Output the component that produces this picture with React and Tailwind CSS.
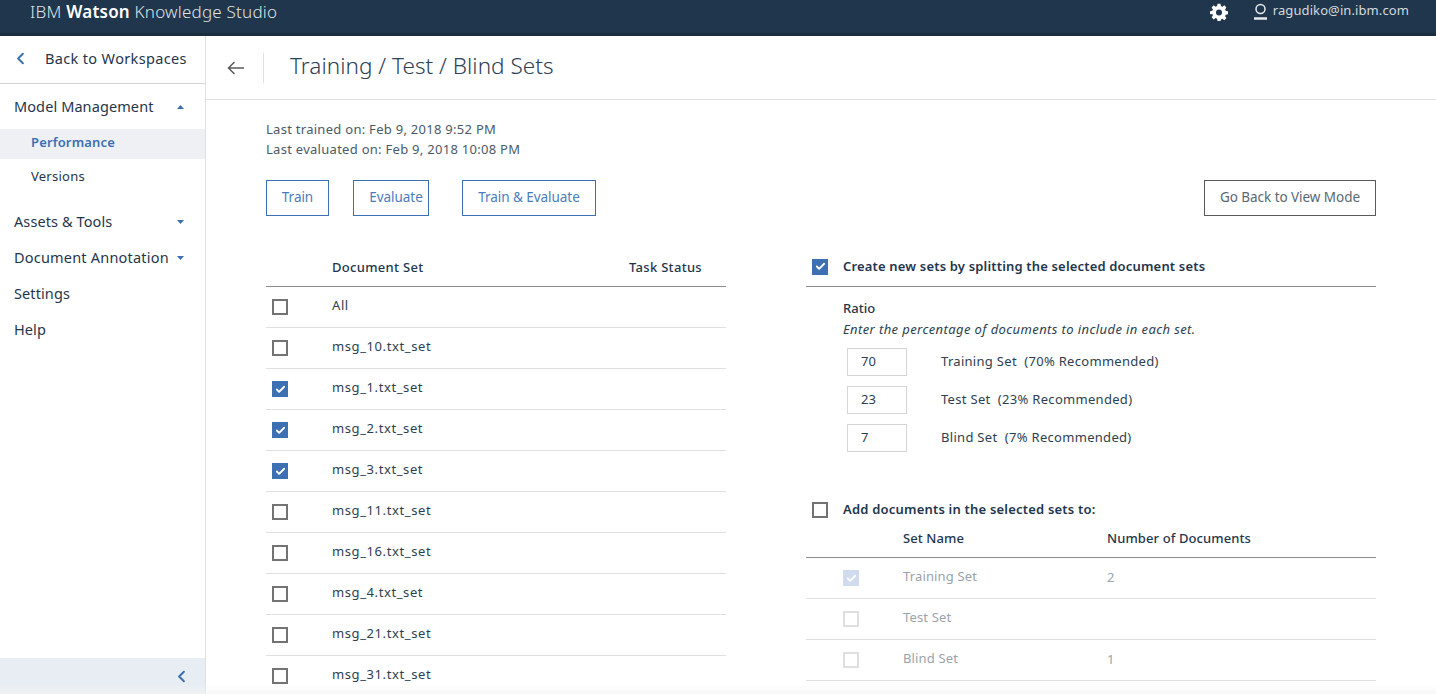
import { ChevronLeft, Check } from 'lucide-react';

const FONT = "font-['Noto_Sans',sans-serif]";

const documentSets = [
    { name: 'All', checked: false },
    { name: 'msg_10.txt_set', checked: false },
    { name: 'msg_1.txt_set', checked: true },
    { name: 'msg_2.txt_set', checked: true },
    { name: 'msg_3.txt_set', checked: true },
    { name: 'msg_11.txt_set', checked: false },
    { name: 'msg_16.txt_set', checked: false },
    { name: 'msg_4.txt_set', checked: false },
    { name: 'msg_21.txt_set', checked: false },
    { name: 'msg_31.txt_set', checked: false },
];

const ratios = [
    { value: '70', label: 'Training Set  (70% Recommended)' },
    { value: '23', label: 'Test Set  (23% Recommended)' },
    { value: '7', label: 'Blind Set  (7% Recommended)' },
];

const targetSets = [
    { name: 'Training Set', count: '2', checked: true },
    { name: 'Test Set', count: '', checked: false },
    { name: 'Blind Set', count: '1', checked: false },
];

function Checkbox({ checked, disabled }) {
    if (checked) {
        return (
            <span className={`flex h-4 w-4 shrink-0 items-center justify-center ${disabled ? 'bg-[#d0dcee]' : 'bg-[#3d70b2]'}`}>
                <Check size={11} strokeWidth={4} className="text-white" />
            </span>
        );
    }
    return <span className={`block h-4 w-4 shrink-0 border-2 ${disabled ? 'border-[#dfdfdf]' : 'border-[#737373]'}`}></span>;
}

function Caret({ up }) {
    return (
        <svg width="7" height="4" viewBox="0 0 7 4" className="fill-[#3d70b2]">
            <path d={up ? 'M0 4 L3.5 0 L7 4 Z' : 'M0 0 L3.5 4 L7 0 Z'} />
        </svg>
    );
}

function OutlineButton({ children, className }) {
    return (
        <button className={`flex h-9 items-center justify-center border pb-[2px] text-[13.5px] tracking-[-0.05px] ${className}`}>
            {children}
        </button>
    );
}

function Header() {
    return (
        <header className="flex h-9 shrink-0 items-start justify-between border-b-[3px] border-[#1a2e3e] bg-[#1f364c] pl-[30px] pr-[27px]">
            <div className="mt-[-1px] text-[17px] leading-[26px] tracking-[0.22px] text-[#dfe3e7] font-light">
                IBM <span className="font-semibold text-white">Watson</span> Knowledge Studio
            </div>
            <div className="flex items-center">
                <svg width="18" height="18" viewBox="0 0 24 24" className="mt-[3px] mr-[25px] fill-white">
                    <path
                        fillRule="evenodd"
                        d="M10 1h4l.6 3.1 1.9.8 2.6-1.8 2.8 2.8-1.8 2.6.8 1.9L24 11v4l-3.1.6-.8 1.9 1.8 2.6-2.8 2.8-2.6-1.8-1.9.8L14 24h-4l-.6-3.1-1.9-.8-2.6 1.8-2.8-2.8 1.8-2.6-.8-1.9L0 15v-4l3.1-.6.8-1.9-1.8-2.6 2.8-2.8 2.6 1.8 1.9-.8zM12 8.500a4 4 0 1 0 0 8 4 4 0 0 0 0-8z"
                    />
                </svg>
                <svg width="15" height="18" viewBox="0 0 15 18" className="mt-[2px] mr-[5px] fill-none stroke-[#e8ebee]">
                    <circle cx="7.500" cy="6" r="4.500" strokeWidth="1.500" />
                    <path d="M1 15.500h13" strokeWidth="2.500" />
                </svg>
                <span className="mt-[-1px] text-[13px] leading-5 tracking-[0.1px] text-[#d5dade]">ragudiko@in.ibm.com</span>
            </div>
        </header>
    );
}

function Sidebar() {
    return (
        <aside className="flex w-[206px] shrink-0 flex-col border-r border-[#dfdfdf] bg-white text-[14.5px] tracking-[0.1px] text-[#1f364c]">
            <div className="flex h-[48px] shrink-0 items-center border-b-[1.5px] border-[#d5d5d5] pb-[2px] pl-[11px]">
                <ChevronLeft size={19} strokeWidth={2.500} className="text-[#3d70b2]" />
                <span className="ml-[15px] tracking-[0.35px]">Back to Workspaces</span>
            </div>
            <div className="flex h-[45px] shrink-0 items-center justify-between pl-[14px] pr-[21px] pt-[1px]">
                Model Management <Caret up />
            </div>
            <div className="flex h-[30px] shrink-0 items-center bg-[#eef0f3] pb-[2px] pl-[31px] text-[13px] font-semibold tracking-[0.15px] text-[#3d70b2]">Performance</div>
            <div className="flex h-[35px] shrink-0 items-center pl-[31px] pt-[1px] text-[13px] tracking-[0.25px]">Versions</div>
            <div className="mt-[10px] flex h-[36px] shrink-0 items-center justify-between pl-[14px] pr-[21px]">
                Assets & Tools <Caret />
            </div>
            <div className="flex h-[36px] shrink-0 items-center justify-between pl-[14px] pr-[21px] tracking-[0.2px]">
                Document Annotation <Caret />
            </div>
            <div className="flex h-[36px] shrink-0 items-center pl-[14px]">Settings</div>
            <div className="flex h-[36px] shrink-0 items-center pl-[14px]">Help</div>
            <div className="mt-auto flex h-9 shrink-0 items-center justify-end bg-[#e8edf4] pr-[14px]">
                <ChevronLeft size={19} strokeWidth={2.500} className="text-[#3d70b2]" />
            </div>
        </aside>
    );
}

function DocumentTable() {
    return (
        <div className="w-[460px] shrink-0">
            <div className="flex h-[37px] items-center border-b border-[#8c8c8c] pb-[1px] text-[13px] font-medium tracking-[0.3px] text-[#1f364c]">
                <span className="ml-[66px] w-[297px]">Document Set</span>
                <span>Task Status</span>
            </div>
            {documentSets.map((row) => (
                <div key={row.name} className="flex h-[41px] shrink-0 items-center border-b border-[#dfdfdf] pl-[6px] text-[13px] tracking-[0.6px] text-[#2d3f50]">
                    <Checkbox checked={row.checked} />
                    <span className="ml-[44px] -mt-[3px]">{row.name}</span>
                </div>
            ))}
        </div>
    );
}

function SplitPanel() {
    return (
        <div className="ml-[80px] w-[570px] shrink-0 text-[#1f364c]">
            <div className="flex h-[37px] items-center border-b border-[#8c8c8c] pb-[3px] pl-[6px]">
                <Checkbox checked />
                <span className="ml-[15px] text-[13px] font-semibold tracking-[0.17px]">Create new sets by splitting the selected document sets</span>
            </div>
            <div className="pl-[37px] pt-[11px]">
                <div className="text-[13px] font-medium leading-[20px]">Ratio</div>
                <div className="mt-[1px] text-[13px] italic leading-[20px] tracking-[0.4px] text-[#2d3f50]">Enter the percentage of documents to include in each set.</div>
                <div className="mt-[9px] flex flex-col gap-[10px] pl-[4px]">
                    {ratios.map((ratio) => (
                        <div key={ratio.value} className="flex h-[28px] items-center">
                            <div className="flex h-[28px] w-[60px] items-center border border-[#d5d5d5] pl-[13px] text-[13px] text-[#2d3f50]">{ratio.value}</div>
                            <span className="ml-[34px] whitespace-pre text-[13px] tracking-[0.3px] text-[#2d3f50]">{ratio.label}</span>
                        </div>
                    ))}
                </div>
            </div>
            <div className="mt-[48px] flex h-[20px] items-center pl-[6px]">
                <Checkbox />
                <span className="ml-[15px] text-[13px] font-semibold tracking-[0.2px]">Add documents in the selected sets to:</span>
            </div>
            <div className="mt-[6px] flex h-[32px] items-center border-b border-[#8c8c8c] pb-[6px] text-[13px] font-medium tracking-[0.1px]">
                <span className="ml-[97px] w-[204px]">Set Name</span>
                <span>Number of Documents</span>
            </div>
            {targetSets.map((row) => (
                <div key={row.name} className="flex h-[41px] items-center border-b border-[#dfdfdf] pl-[37px] text-[13px] tracking-[0.15px] text-[#9aa3ab]">
                    <Checkbox checked={row.checked} disabled />
                    <span className="ml-[44px] -mt-[3px] w-[204px]">{row.name}</span>
                    <span>{row.count}</span>
                </div>
            ))}
        </div>
    );
}

export default function App() {
    return (
        <div className={`relative flex h-[694px] w-[1436px] flex-col overflow-hidden bg-white ${FONT}`}>
            <Header />
            <div className="flex min-h-0 flex-1">
                <Sidebar />
                <main className="min-w-0 flex-1">
                    <div className="flex h-[64px] items-center border-b border-[#dfdfdf] pl-[21px]">
                        <svg width="17" height="14" viewBox="0 0 17 14" className="fill-none stroke-[#595959] stroke-[1.5]">
                            <path d="M17 7H1.500M7.500 1 1.500 7l6 6" />
                        </svg>
                        <span className="ml-[19px] h-[30px] w-px bg-[#dfdfdf]"></span>
                        <h1 className="ml-[26px] pb-[4px] text-[22.500px] font-light tracking-[0.04px] text-[#2d4254]">Training / Test / Blind Sets</h1>
                    </div>
                    <div className="pl-[60px] pr-[60px]">
                        <div className="mt-[19px] text-[13px] leading-[20px] tracking-[0.28px] text-[#4b5a68]">
                            <div>Last trained on: Feb 9, 2018 9:52 PM</div>
                            <div>Last evaluated on: Feb 9, 2018 10:08 PM</div>
                        </div>
                        <div className="mt-[21px] flex">
                            <OutlineButton className="w-[63px] border-[#3d70b2] text-[#4a7dbd]">Train</OutlineButton>
                            <OutlineButton className="ml-[24px] w-[76px] border-[#3d70b2] pl-[10px] text-[#4a7dbd]">Evaluate</OutlineButton>
                            <OutlineButton className="ml-[33px] w-[134px] border-[#3d70b2] text-[#4a7dbd]">Train & Evaluate</OutlineButton>
                            <OutlineButton className="ml-auto w-[172px] border-[#5a5a5a] text-[#5a6872]">Go Back to View Mode</OutlineButton>
                        </div>
                        <div className="mt-[34px] flex items-start">
                            <DocumentTable />
                            <SplitPanel />
                        </div>
                    </div>
                </main>
            </div>
            <div className="pointer-events-none absolute bottom-0 left-0 h-[10px] w-full bg-gradient-to-b from-transparent to-[#f4f4f4]/70"></div>
        </div>
    );
}
